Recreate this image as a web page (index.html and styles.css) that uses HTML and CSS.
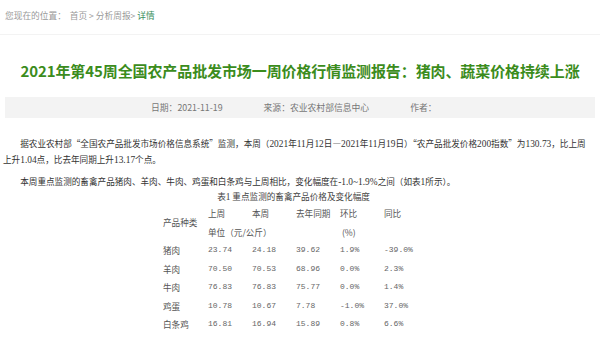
FILE: index.html
```html
<!DOCTYPE html>
<html lang="zh-CN">
<head>
  <meta charset="UTF-8" />
  <title>分析周报 - 详情</title>
  <link rel="stylesheet" href="styles.css">
</head>
<body>
  <!-- 面包屑 -->
  <div class="crumb">
    您现在的位置：&nbsp; <a href="#">首页</a> &gt; <a href="#">分析周报</a>&gt; <span class="here">详情</span>
  </div>

  <!-- 标题 -->
  <h1 class="title">2021年第45周全国农产品批发市场一周价格行情监测报告：猪肉、蔬菜价格持续上涨</h1>

  <div class="info">
    <span>日期：2021-11-19</span>
    <span>来源：农业农村部信息中心</span>
    <span>作者：</span>
  </div>

  <!-- 正文 -->
  <div class="article">
    <p>据农业农村部“全国农产品批发市场价格信息系统”监测，本周（<span class="num">2021</span>年<span class="num">11</span>月<span class="num">12</span>日—<span class="num">2021</span>年<span class="num">11</span>月<span class="num">19</span>日）“农产品批发价格<span class="num">200</span>指数”为<span class="num">130.73</span>，比上周上升<span class="num">1.04</span>点，比去年同期上升<span class="num">13.17</span>个点。</p>
    <p>本周重点监测的畜禽产品猪肉、羊肉、牛肉、鸡蛋和白条鸡与上周相比，变化幅度在<span class="num">-1.0~1.9%</span>之间（如表<span class="num">1</span>所示）。</p>

    <div class="caption">表<span class="num">1</span> 重点监测的畜禽产品价格及变化幅度</div>
    <table class="prices">
      <tr>
        <td class="head" rowspan="2">产品种类</td>
        <td class="head">上周</td>
        <td class="head">本周</td>
        <td class="head">去年同期</td>
        <td class="head">环比</td>
        <td class="head">同比</td>
      </tr>
      <tr>
        <td class="head" colspan="3">单位（元/公斤）</td>
        <td class="head">&nbsp;(%)</td>
        <td></td>
      </tr>
      <tr><td class="name">猪肉</td><td>23.74</td><td>24.18</td><td>39.62</td><td>1.9%</td><td>-39.0%</td></tr>
      <tr><td class="name">羊肉</td><td>70.50</td><td>70.53</td><td>68.96</td><td>0.0%</td><td>2.3%</td></tr>
      <tr><td class="name">牛肉</td><td>76.83</td><td>76.83</td><td>75.77</td><td>0.0%</td><td>1.4%</td></tr>
      <tr><td class="name">鸡蛋</td><td>10.78</td><td>10.67</td><td>7.78</td><td>-1.0%</td><td>37.0%</td></tr>
      <tr><td class="name">白条鸡</td><td>16.81</td><td>16.94</td><td>15.89</td><td>0.8%</td><td>6.6%</td></tr>
    </table>
  </div>
</body>
</html>
```

FILE: styles.css
```css
* {
  margin: 0;
  padding: 0;
  box-sizing: border-box;
}

html, body {
  background: #fff;
  font-family: "Noto Sans CJK SC", "Noto Sans", sans-serif;
  color: #333;
  overflow: hidden;
}

.crumb {
  height: 35px;
  padding: 10px 0 0 5px;
  font-size: 8.7px;
  line-height: 11px;
  color: #999;
  border-bottom: 1px solid #f3f3f3;
}

.crumb a {
  color: #999;
  text-decoration: none;
}

.crumb .here {
  color: #3a8f5c;
}

.title {
  margin-top: 26px;
  font-size: 15px;
  line-height: 20px;
  font-weight: 700;
  color: #3b8c1c;
  text-align: center;
  letter-spacing: -0.1px;
}

.info {
  margin: 16px 5px 0;
  height: 21px;
  background: #f3f3f3;
  display: flex;
  align-items: center;
  padding-left: 146px;
  gap: 41px;
  font-size: 8.8px;
  color: #777;
}

.article {
  padding: 17px 12px 0 3px;
  font-size: 8.6px;
  line-height: 16px;
  color: #333;
}

.article p {
  text-indent: 2em;
}

.article p + p {
  margin-top: 6px;
}

.num {
  font-family: "Liberation Serif", serif;
  font-size: 9.4px;
  line-height: 1;
}

.caption {
  text-align: center;
  line-height: 15px;
  color: #444;
  padding-right: 4px;
}

.prices {
  border-collapse: collapse;
  margin-left: 160px;
}

.prices td {
  width: 44px;
  height: 18.5px;
  line-height: 18.5px;
  padding: 0;
  text-align: left;
  vertical-align: middle;
  font-family: "Liberation Mono", monospace;
  font-size: 8px;
  color: #666;
}

.prices td.head,
.prices td.name {
  font-family: "Noto Sans CJK SC", sans-serif;
  font-size: 8.6px;
  color: #555;
}

.prices td:first-child {
  width: 45px;
}
```
